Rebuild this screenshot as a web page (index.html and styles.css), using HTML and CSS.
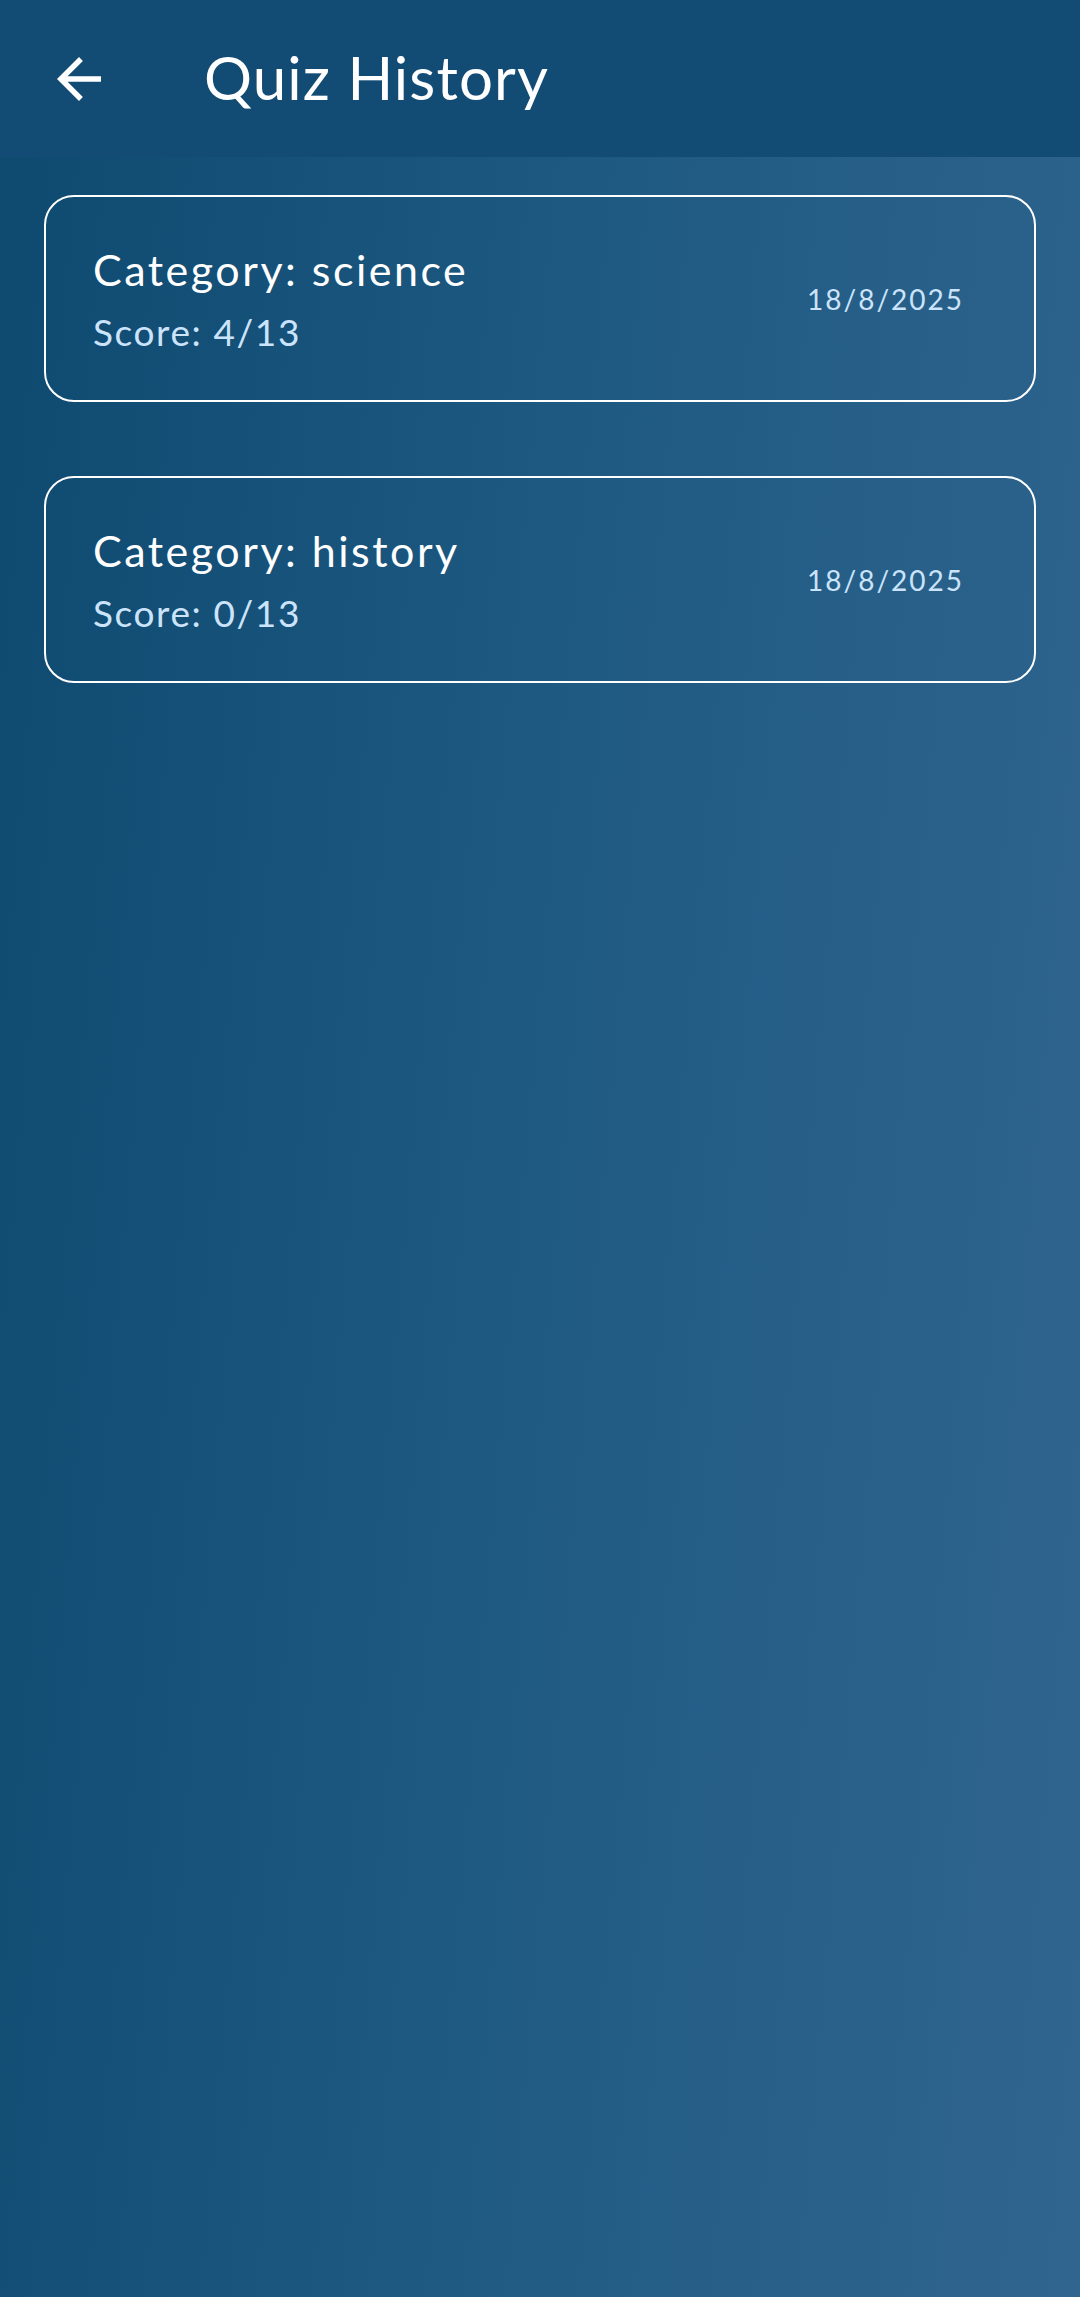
FILE: index.html
```html
<!DOCTYPE html>
<html lang="en">
<head>
<meta charset="utf-8">
<title>Quiz History</title>
<link rel="stylesheet" href="styles.css">
</head>
<body>
<div class="screen">
  <header class="appbar">
    <button class="back" aria-label="Back">
      <svg viewBox="0 0 24 24" width="66" height="66"><path fill="#ffffff" d="M20 11H7.83l5.59-5.59L12 4l-8 8 8 8 1.41-1.41L7.83 13H20v-2z"/></svg>
    </button>
    <h1 class="title">Quiz History</h1>
  </header>
  <main class="list">
    <div class="card">
      <div class="info">
        <div class="category">Category: science</div>
        <div class="score">Score: 4/13</div>
      </div>
      <div class="date">18/8/2025</div>
    </div>
    <div class="card">
      <div class="info">
        <div class="category">Category: history</div>
        <div class="score">Score: 0/13</div>
      </div>
      <div class="date">18/8/2025</div>
    </div>
  </main>
</div>
</body>
</html>
```
FILE: styles.css
```css
html, body {
  margin: 0;
  padding: 0;
}
body {
  width: 1080px;
  height: 2297px;
  overflow: hidden;
  font-family: Lato, "Noto Sans", "Liberation Sans", sans-serif;
  background: linear-gradient(95deg, #0e4970 0%, #1f5a83 50%, #30658f 100%);
}
.screen {
  display: flex;
  flex-direction: column;
  min-height: 2297px;
}
.appbar {
  height: 157px;
  background: #124c74;
  display: flex;
  align-items: center;
}
.back {
  width: 66px;
  height: 66px;
  margin-left: 46px;
  padding: 0;
  border: 0;
  background: none;
  display: flex;
  align-items: center;
  justify-content: center;
}
.title {
  margin: 0 0 4px 92px;
  font-weight: 400;
  font-size: 60px;
  color: #ffffff;
  letter-spacing: 1.1px;
}
.list {
  display: flex;
  flex-direction: column;
  gap: 74px;
  padding: 38px 44px 0 44px;
}
.card {
  box-sizing: border-box;
  height: 207px;
  border: 2.5px solid #ffffff;
  border-radius: 30px;
  display: flex;
  align-items: center;
  justify-content: space-between;
  padding: 0 70px 0 47px;
}
.info {
  display: flex;
  flex-direction: column;
  padding-top: 5px;
}
.category {
  font-size: 43px;
  line-height: 62px;
  color: #ffffff;
  letter-spacing: 2.5px;
}
.score {
  font-size: 37px;
  line-height: 62px;
  color: #cbe4fb;
  letter-spacing: 1.6px;
}
.date {
  font-size: 28px;
  color: #cbe4fb;
  letter-spacing: 2px;
}
```
